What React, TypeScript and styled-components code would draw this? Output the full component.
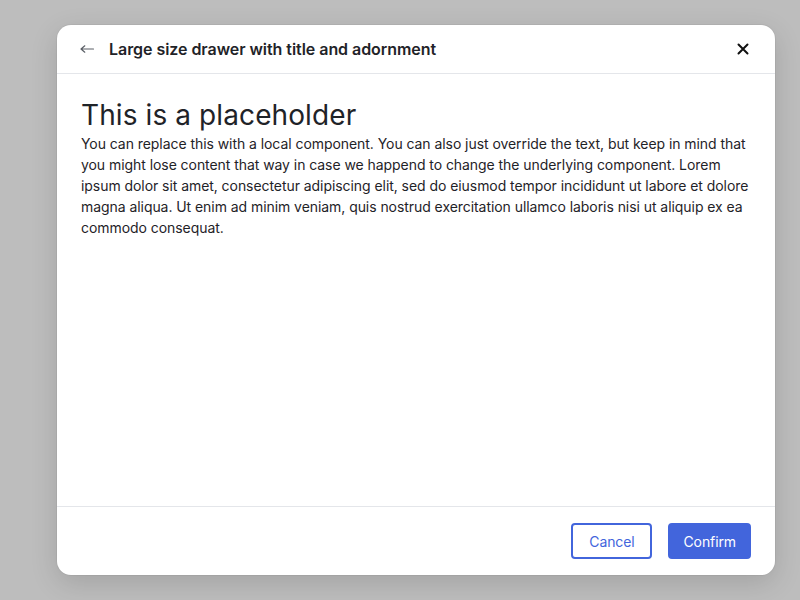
import styled, { createGlobalStyle } from "styled-components";

const GlobalStyle = createGlobalStyle`
  html, body {
    margin: 0;
    padding: 0;
    background: #bdbdbd;
    font-family: Inter, "Noto Sans", sans-serif;
    color: #1f2328;
  }
  * {
    box-sizing: border-box;
  }
`;

const Backdrop = styled.div`
  width: 800px;
  height: 600px;
  display: flex;
  align-items: flex-start;
  padding: 25px 0 0 57px;
  overflow: hidden;
`;

const Drawer = styled.div`
  width: 718px;
  height: 550px;
  background: #ffffff;
  border-radius: 14px;
  box-shadow: 0 8px 28px rgba(0, 0, 0, 0.14), 0 0 0 1px rgba(0, 0, 0, 0.04);
  display: flex;
  flex-direction: column;
  overflow: hidden;
`;

const Header = styled.header`
  height: 49px;
  flex-shrink: 0;
  display: flex;
  align-items: center;
  gap: 13px;
  padding: 0 24px 0 23px;
  border-bottom: 1px solid #e4e6ea;
`;

const IconButton = styled.button`
  border: none;
  background: none;
  padding: 0;
  display: flex;
  align-items: center;
  justify-content: center;
  cursor: pointer;
  color: #1f2328;
`;

const Title = styled.h2`
  margin: 0;
  flex: 1;
  font-size: 16px;
  font-weight: 600;
  letter-spacing: -0.05px;
`;

const Body = styled.div`
  flex: 1;
  padding: 24px 24px 0;
`;

const Heading = styled.h1`
  margin: 0;
  font-size: 28px;
  font-weight: 400;
  line-height: 35px;
  letter-spacing: 0.1px;
`;

const Paragraph = styled.p`
  margin: 0;
  font-size: 14px;
  line-height: 21px;
  letter-spacing: -0.06px;
`;

const Footer = styled.footer`
  flex-shrink: 0;
  height: 69px;
  display: flex;
  align-items: center;
  justify-content: flex-end;
  gap: 16px;
  padding: 0 24px;
  border-top: 1px solid #e4e6ea;
`;

const Button = styled.button<{ $primary?: boolean }>`
  height: 36px;
  padding: 0 13px;
  min-width: 81px;
  border-radius: 4px;
  font-family: inherit;
  font-size: 14px;
  letter-spacing: -0.1px;
  cursor: pointer;
  border: 2px solid #4265dc;
  background: ${(p) => (p.$primary ? "#4265dc" : "#ffffff")};
  color: ${(p) => (p.$primary ? "#ffffff" : "#4265dc")};
`;

function App() {
  return (
    <>
      <GlobalStyle />
      <Backdrop>
        <Drawer>
          <Header>
            <IconButton aria-label="Back">
              <svg width="16" height="16" viewBox="0 0 16 16" fill="none" stroke="#5a5f66" strokeWidth="1.2" strokeLinecap="round" strokeLinejoin="round">
                <path d="M13.5 8H1M4.8 4.8L1 8l3.8 3.2" />
              </svg>
            </IconButton>
            <Title>Large size drawer with title and adornment</Title>
            <IconButton aria-label="Close">
              <svg width="16" height="16" viewBox="0 0 16 16" fill="none" stroke="#111" strokeWidth="2" strokeLinecap="round">
                <path d="M3.5 3.5l9 9M12.5 3.5l-9 9" />
              </svg>
            </IconButton>
          </Header>
          <Body>
            <Heading>This is a placeholder</Heading>
            <Paragraph>
              You can replace this with a local component. You can also just override the text, but keep in mind that
              you might lose content that way in case we happend to change the underlying component. Lorem ipsum dolor
              sit amet, consectetur adipiscing elit, sed do eiusmod tempor incididunt ut labore et dolore magna aliqua.
              Ut enim ad minim veniam, quis nostrud exercitation ullamco laboris nisi ut aliquip ex ea commodo
              consequat.
            </Paragraph>
          </Body>
          <Footer>
            <Button>Cancel</Button>
            <Button $primary>Confirm</Button>
          </Footer>
        </Drawer>
      </Backdrop>
    </>
  );
}

export default App;
